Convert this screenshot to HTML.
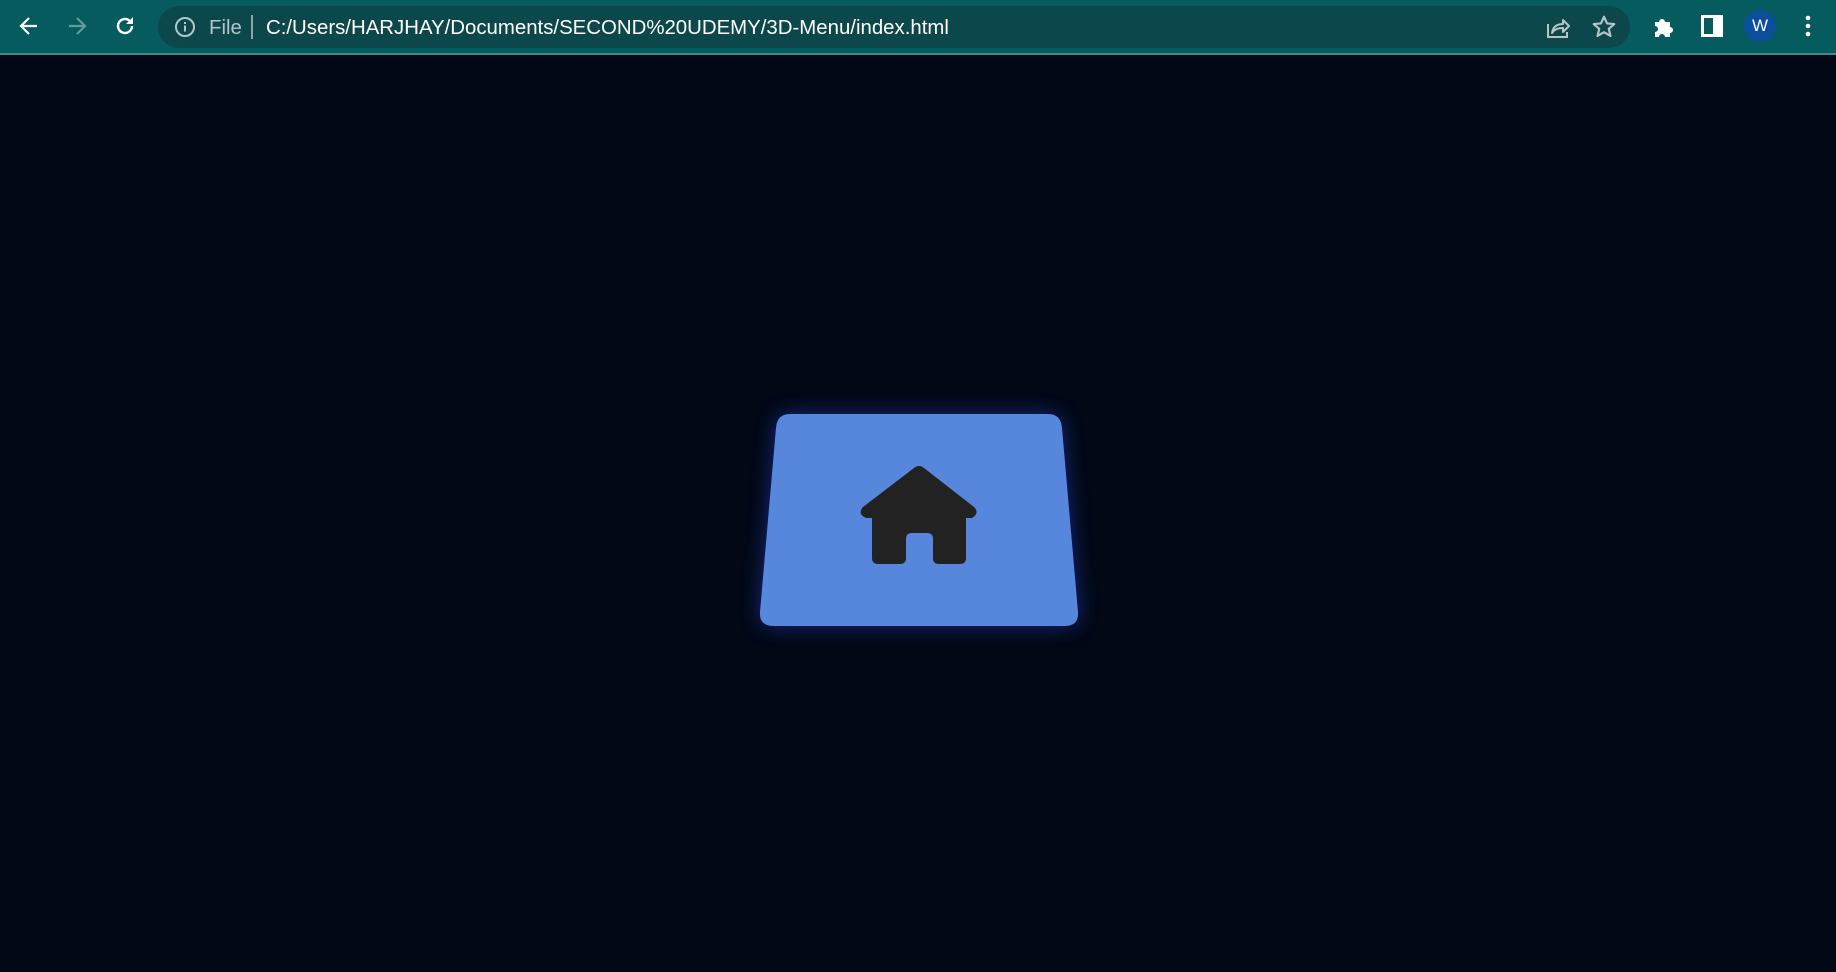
<!DOCTYPE html>
<html><head><meta charset="utf-8"><style>
html,body{margin:0;padding:0;width:1836px;height:972px;overflow:hidden;background:#020816;font-family:"Liberation Sans",sans-serif}
.bar{position:absolute;left:0;top:0;width:1836px;height:53px;background:#055b5e;border-bottom:2px solid #3f8a8d}
.addr{position:absolute;left:158px;top:6px;width:1472px;height:42px;border-radius:21px;background:#0c474b}
.t{position:absolute;top:16px;font-size:20.4px;line-height:24px;white-space:nowrap}
svg{position:absolute}
</style></head><body>
<div class="bar">
<svg style="left:17px;top:14px" width="24" height="24" viewBox="0 0 24 24"><path d="M20 12H5M12 4l-8 8 8 8" stroke="#fff" stroke-width="2.2" fill="none"/></svg>
<svg style="left:65px;top:14px" width="24" height="24" viewBox="0 0 24 24"><path d="M4 12h15M12 4l8 8-8 8" stroke="#5f9c9e" stroke-width="2.2" fill="none"/></svg>
<svg style="left:113px;top:14px" width="24" height="24" viewBox="0 0 24 24"><path d="M19 12a7 7 0 1 1-2.2-5.1" stroke="#fff" stroke-width="2.4" fill="none"/><path d="M20 3v7h-7z" fill="#fff"/></svg>
<div class="addr"></div>
<svg style="left:174px;top:16px" width="22" height="22" viewBox="0 0 22 22"><circle cx="11" cy="11" r="9" stroke="#b5c5c6" stroke-width="2" fill="none"/><rect x="10" y="9.5" width="2" height="6" fill="#b5c5c6"/><rect x="10" y="6" width="2" height="2" fill="#b5c5c6"/></svg>
<div class="t" style="left:209px;color:#b5c5c6">File</div>
<div style="position:absolute;left:251px;top:15px;width:2px;height:24px;background:#8aa7a8"></div>
<div class="t" style="left:266px;color:#fff">C:/Users/HARJHAY/Documents/SECOND%20UDEMY/3D-Menu/index.html</div>
<svg style="left:1545px;top:15px" width="26" height="24" viewBox="0 0 26 24"><path d="M3 9v13h19v-5" stroke="#b5c5c6" stroke-width="2" fill="none"/><path d="M7 18c1-6 5-9 11-9V5l6 6-6 6v-4c-5 0-8 1-11 5z" stroke="#b5c5c6" stroke-width="2" fill="none" stroke-linejoin="round"/></svg>
<svg style="left:1591px;top:14px" width="26" height="26" viewBox="0 0 24 24"><path d="M12 2.5l2.8 6.2 6.7.6-5.1 4.4 1.6 6.6L12 16.8l-6 3.5 1.6-6.6-5.1-4.4 6.7-.6z" stroke="#b5c5c6" stroke-width="2" fill="none" stroke-linejoin="round"/></svg>
<svg style="left:1652px;top:15px" width="24" height="24" viewBox="0 0 24 24"><path d="M3 7h4a3 3 0 1 1 6 0h5v5a3 3 0 1 1 0 6v4h-5a3 3 0 1 0-6 0H3v-5a3 3 0 1 0 0-6z" fill="#fff"/></svg>
<svg style="left:1701px;top:15px" width="22" height="22" viewBox="0 0 22 22"><rect x="1.5" y="1.5" width="19" height="19" stroke="#fff" stroke-width="3" fill="none"/><rect x="12" y="1" width="9" height="20" fill="#fff"/></svg>
<div style="position:absolute;left:1744px;top:10px;width:32px;height:32px;border-radius:50%;background:#0b4f9c;color:#fff;font-size:17px;line-height:32px;text-align:center">W</div>
<svg style="left:1802px;top:14px" width="12" height="24" viewBox="0 0 12 24"><circle cx="6" cy="4" r="2.3" fill="#fff"/><circle cx="6" cy="12" r="2.3" fill="#fff"/><circle cx="6" cy="20" r="2.3" fill="#fff"/></svg>
</div>
<svg style="left:700px;top:360px;overflow:visible" width="440" height="320" viewBox="700 360 440 320">
<defs><filter id="g" x="-30%" y="-30%" width="160%" height="160%"><feGaussianBlur stdDeviation="10"/></filter></defs>
<path d="M790 414H1048Q1061 414 1062 428L1078 612Q1079 626 1065 626H774Q759 626 760 612L776 428Q777 414 790 414Z" fill="#2b3fd0" opacity="0.55" filter="url(#g)"/>
<path d="M790 414H1048Q1061 414 1062 428L1078 612Q1079 626 1065 626H774Q759 626 760 612L776 428Q777 414 790 414Z" fill="#5687dd"/>
<path d="M914 468Q919 464 924 468L974 507Q980 513 972 518H966V558Q966 564 960 564H939Q933 564 933 558V539Q933 533 927 533H912Q906 533 906 539V558Q906 564 900 564H878Q872 564 872 558V518H866Q857 514 863 507Z" fill="#222"/>
</svg>
</body></html>
